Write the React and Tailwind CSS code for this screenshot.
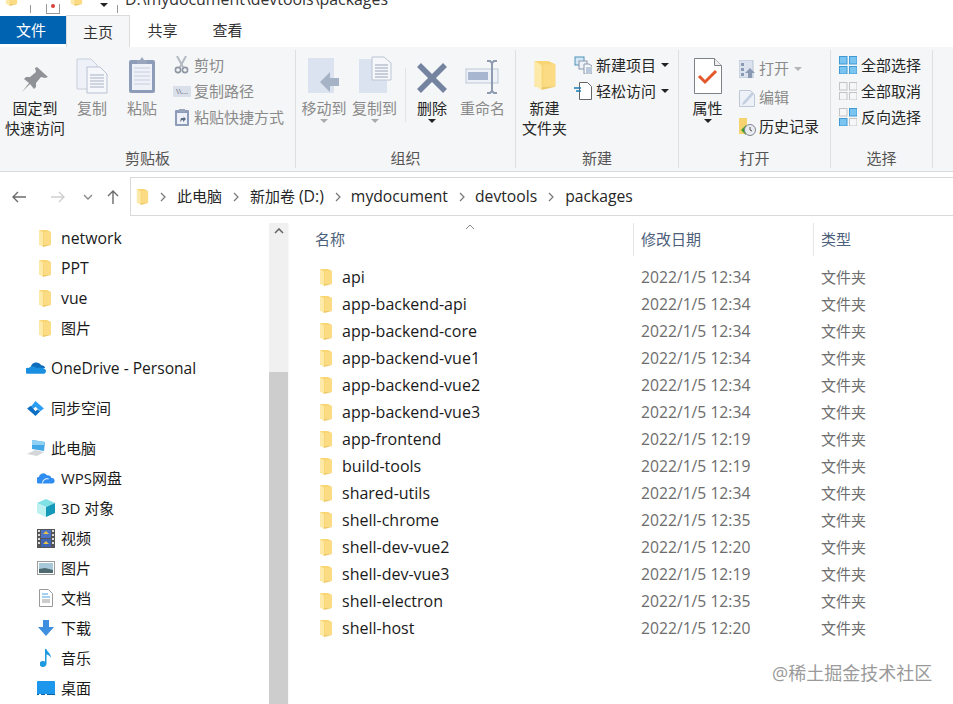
import React from 'react';

const sidebarTop = [
  { name: 'network', latin: true },
  { name: 'PPT', latin: true },
  { name: 'vue', latin: true },
  { name: '图片' },
];

const files = [
  ['api', '2022/1/5 12:34'],
  ['app-backend-api', '2022/1/5 12:34'],
  ['app-backend-core', '2022/1/5 12:34'],
  ['app-backend-vue1', '2022/1/5 12:34'],
  ['app-backend-vue2', '2022/1/5 12:34'],
  ['app-backend-vue3', '2022/1/5 12:34'],
  ['app-frontend', '2022/1/5 12:19'],
  ['build-tools', '2022/1/5 12:19'],
  ['shared-utils', '2022/1/5 12:34'],
  ['shell-chrome', '2022/1/5 12:35'],
  ['shell-dev-vue2', '2022/1/5 12:20'],
  ['shell-dev-vue3', '2022/1/5 12:19'],
  ['shell-electron', '2022/1/5 12:35'],
  ['shell-host', '2022/1/5 12:20'],
];

const Folder = ({ className = 'w-[14px] h-[19px]' }) => (
  <svg viewBox="0 0 14 19" className={className}>
    <path d="M1 1h8l4 2v13H1z" fill="#f9d674" />
    <path d="M6 3h7v13H6z" fill="#fbdc85" />
    <path d="M1 1l4 2.500V18l-4-2.500z" fill="#fdeaa9" />
    <path d="M5 16h8l-8 2z" fill="#edc968" />
  </svg>
);

const Caret = ({ color = '#222' }) => (
  <svg viewBox="0 0 8 4" className="w-2 h-1">
    <path d="M0 0h8L4 4z" fill={color} />
  </svg>
);

const Pin = () => (
  <svg viewBox="0 0 28 28" className="w-7 h-7">
    <path d="M16 1l11 10-3 1-4-1-5 6 0 4-2 2-4-5-8 8 7-9-5-4 2-2 4 0 6-5-1-4z" fill="#8f9296" />
  </svg>
);

const CopyIcon = () => (
  <svg viewBox="0 0 32 36" className="w-8 h-9">
    <path d="M1 1h14l6 6v24H1z" fill="#eef2f8" stroke="#c8cfdb" />
    <path d="M11 9h13l7 7v19H11z" fill="#f5f7fb" stroke="#b9c2d2" />
    <path d="M14 17h14M14 20h14M14 23h14M14 26h14M14 29h14" stroke="#a9b2c4" />
  </svg>
);

const PasteIcon = () => (
  <svg viewBox="0 0 28 38" className="w-7 h-[38px]">
    <rect x="1" y="4" width="26" height="33" rx="2" fill="#8d9cb8" />
    <rect x="4" y="8" width="20" height="26" fill="#eef1f8" />
    <path d="M6 12h16M6 16h16M6 20h16M6 24h16M6 28h16" stroke="#c5cede" />
    <path d="M9 4h3l2-3 2 3h3v4H9z" fill="#98a5bd" />
  </svg>
);

const MoveIcon = () => (
  <svg viewBox="0 0 34 38" className="w-[34px] h-[38px]">
    <rect x="1" y="2" width="26" height="35" fill="#dbe3f1" />
    <path d="M13 26l10-10v6h9v8h-9v6z" fill="#a6b2c6" />
  </svg>
);

const CopyToIcon = () => (
  <svg viewBox="0 0 34 38" className="w-[34px] h-[38px]">
    <rect x="1" y="3" width="28" height="34" fill="#dbe3f1" />
    <path d="M14 1h12l7 6v17H14z" fill="#f5f7fb" stroke="#bcc5d4" />
    <path d="M17 9h13M17 12h13M17 15h13M17 18h13M17 21h13" stroke="#9aa5b8" />
  </svg>
);

const DeleteIcon = () => (
  <svg viewBox="0 0 32 32" className="w-8 h-8">
    <path d="M3 3l26 26M29 3L3 29" stroke="#74839f" strokeWidth="5.500" />
  </svg>
);

const RenameIcon = () => (
  <svg viewBox="0 0 36 34" className="w-9 h-[34px]">
    <rect x="1" y="9" width="32" height="14" fill="#eef2f8" stroke="#bcc7d8" />
    <rect x="3" y="12" width="20" height="8" fill="#a8b6d0" />
    <path d="M22 1h3l2 2 2-2h3M27 3v28M22 33h3l2-2 2 2h3" fill="none" stroke="#8f9bb0" strokeWidth="2" />
  </svg>
);

const PropsIcon = () => (
  <svg viewBox="0 0 28 36" className="w-7 h-9">
    <path d="M.5.5h20l7 7v28H.5z" fill="#fff" stroke="#7f8187" />
    <path d="M20.500.5v7h7" fill="#eee" stroke="#7f8187" />
    <path d="M5 18l6 6 11-11" fill="none" stroke="#e2572b" strokeWidth="3" />
  </svg>
);

const NewItem = () => (
  <svg viewBox="0 0 18 18" className="w-[18px] h-[18px]">
    <rect x="1" y="1" width="9" height="8" fill="#d3e7f5" stroke="#4d94b8" />
    <rect x="5" y="5" width="8" height="8" fill="#eef2f8" stroke="#8a98ad" />
    <path d="M10 8h5l3 2v8h-8z" fill="#f5f7fb" stroke="#8a98ad" />
    <path d="M12 12h5M12 14h5M12 16h5" stroke="#7d9cc0" />
  </svg>
);

const EasyAccess = () => (
  <svg viewBox="0 0 18 18" className="w-[18px] h-[18px]">
    <path d="M5.500.5h8l4 4v13h-12z" fill="#fff" stroke="#666" />
    <path d="M0 6h7M2 9h5" stroke="#1b7fb8" strokeWidth="1.400" />
  </svg>
);

const OpenIcon = () => (
  <svg viewBox="0 0 16 18" className="w-4 h-[18px]">
    <rect x="0" y="0" width="14" height="18" fill="#dce3ee" stroke="#b9c3d2" />
    <path d="M2 3h3v3H2zM2 8h3v3H2zM2 13h3v3H2z" fill="#8b9ab3" />
    <path d="M11 8l5 5h-3v5h-4v-5H6z" fill="#8b9ab3" />
  </svg>
);

const EditIcon = () => (
  <svg viewBox="0 0 16 18" className="w-4 h-[18px]">
    <path d="M.5 1.500h11l4 4v12H.5z" fill="#eef2f8" stroke="#bcc7d8" />
    <path d="M4 13L13 3l2 2-9 10-3 1z" fill="#c4d0e2" />
  </svg>
);

const HistoryIcon = () => (
  <svg viewBox="0 0 18 18" className="w-[18px] h-[18px]">
    <path d="M1 0h8v16H1z" fill="#f7d36f" />
    <path d="M3 12l5-5v3h2v4H8v3z" fill="#3f9c35" />
    <circle cx="12" cy="12" r="5.500" fill="#e8ebef" stroke="#808690" />
    <path d="M12 9v3l2 1" fill="none" stroke="#555" />
  </svg>
);

const Grid = ({ cells }) => (
  <svg viewBox="0 0 18 18" className="w-[18px] h-[18px]">
    {[[0, 0], [10, 0], [0, 10], [10, 10]].map(([x, y], i) => {
      const on = cells[i];
      return (
        <rect key={i} x={x + 0.5} y={y + 0.5} width="7.500" height="7.500" fill={on ? '#7cc4f0' : '#f5f6f7'} stroke={on ? '#3c9ad6' : '#c4c4c4'} />
      );
    })}
  </svg>
);

const Scissors = () => (
  <svg viewBox="0 0 16 18" className="w-4 h-[18px]">
    <path d="M3 0l6 11M12 0L6 11" stroke="#b4bac4" strokeWidth="2" />
    <circle cx="4" cy="14" r="2.600" fill="none" stroke="#8e96a4" strokeWidth="1.600" />
    <circle cx="11" cy="14" r="2.600" fill="none" stroke="#8e96a4" strokeWidth="1.600" />
  </svg>
);

const PathIcon = () => (
  <div className="w-[18px] h-[11px] bg-[#d9e0ea] flex items-center justify-center text-[8px] leading-none text-[#667]">\\...</div>
);

const ShortcutIcon = () => (
  <svg viewBox="0 0 14 18" className="w-[14px] h-[18px]">
    <rect x="0" y="2" width="14" height="16" rx="1" fill="#8d9cb8" />
    <rect x="2" y="5" width="10" height="11" fill="#eef1f8" />
    <path d="M4 1h6v3H4z" fill="#98a5bd" />
    <path d="M5 14l1-4 3 0-1-2 3 3-3 3 0-2-1 0z" fill="#5e6d86" />
  </svg>
);

const LargeBtn = ({ width, icon, lines, dim, caret, caretColor }) => (
  <div className={`${width} shrink-0 flex flex-col items-center`}>
    <div className="h-[44px] flex items-end justify-center">{icon}</div>
    <div className={`mt-[4px] text-[15px] leading-[20px] text-center whitespace-nowrap ${dim ? 'text-[#8a8a8a]' : 'text-[#262626]'}`}>
      {lines.map((l) => (
        <div key={l}>{l}</div>
      ))}
    </div>
    {caret && (
      <div className="mt-[1px] leading-none flex">
        <Caret color={caretColor} />
      </div>
    )}
  </div>
);

const SmallRow = ({ icon, label, dim, caret, gap = 'ml-[3px]', height = 'h-[26px]' }) => (
  <div className={`${height} flex items-center whitespace-nowrap`}>
    <div className="w-[18px] flex justify-center">{icon}</div>
    <span className={`${gap} text-[15px] ${dim ? 'text-[#8a8a8a]' : 'text-[#262626]'}`}>{label}</span>
    {caret && (
      <span className="ml-[5px]">
        <Caret color={dim ? '#b5b5b5' : '#222'} />
      </span>
    )}
  </div>
);

const Group = ({ width, label, children }) => (
  <div className={`${width} shrink-0 h-full flex flex-col border-r border-[#dfe0e2]`}>
    <div className="h-[98px] shrink-0 flex items-start">{children}</div>
    <div className="text-center text-[15px] leading-[20px] text-[#555]">{label}</div>
  </div>
);

const Ribbon = () => (
  <div className="h-[125px] bg-[#f5f6f7] border-b border-[#dadbdc] flex pt-[3px] pb-[3px]">
    <Group width="w-[296px]" label="剪贴板">
      <LargeBtn width="w-[70px]" icon={<Pin />} lines={['固定到', '快速访问']} />
      <LargeBtn width="w-[44px]" icon={<CopyIcon />} lines={['复制']} dim />
      <LargeBtn width="w-[56px]" icon={<PasteIcon />} lines={['粘贴']} dim />
      <div className="ml-[3px] pt-[2px]">
        <SmallRow icon={<Scissors />} label="剪切" dim />
        <SmallRow icon={<PathIcon />} label="复制路径" dim />
        <SmallRow icon={<ShortcutIcon />} label="粘贴快捷方式" dim />
      </div>
    </Group>
    <Group width="w-[220px]" label="组织">
      <LargeBtn width="w-[56px]" icon={<MoveIcon />} lines={['移动到']} dim caret caretColor="#aaa" />
      <LargeBtn width="w-[45px]" icon={<CopyToIcon />} lines={['复制到']} dim caret caretColor="#aaa" />
      <div className="w-px h-[54px] mt-[18px] ml-[8px] bg-[#e2e3e5]" />
      <LargeBtn width="w-[52px]" icon={<DeleteIcon />} lines={['删除']} caret />
      <LargeBtn width="w-[49px]" icon={<RenameIcon />} lines={['重命名']} dim />
    </Group>
    <Group width="w-[163px]" label="新建">
      <LargeBtn width="w-[57px]" icon={<Folder className="w-[24px] h-[33px] mb-[2px]" />} lines={['新建', '文件夹']} />
      <div className="ml-[1px] pt-[2px]">
        <SmallRow icon={<NewItem />} gap="ml-[4px]" label="新建项目" caret />
        <SmallRow icon={<EasyAccess />} gap="ml-[4px]" label="轻松访问" caret />
      </div>
    </Group>
    <Group width="w-[152px]" label="打开">
      <LargeBtn width="w-[57px]" icon={<PropsIcon />} lines={['属性']} caret />
      <div className="ml-[2px] pt-[4px]">
        <SmallRow height="h-[29px]" icon={<OpenIcon />} label="打开" dim caret />
        <SmallRow height="h-[29px]" icon={<EditIcon />} label="编辑" dim />
        <SmallRow height="h-[29px]" icon={<HistoryIcon />} label="历史记录" />
      </div>
    </Group>
    <Group width="w-[102px]" label="选择">
      <div className="pl-[8px] pt-[2px]">
        <SmallRow icon={<Grid cells={[1, 1, 1, 1]} />} gap="ml-[4px]" label="全部选择" />
        <SmallRow icon={<Grid cells={[0, 0, 0, 0]} />} gap="ml-[4px]" label="全部取消" />
        <SmallRow icon={<Grid cells={[0, 1, 1, 0]} />} gap="ml-[4px]" label="反向选择" />
      </div>
    </Group>
  </div>
);

const Chevron = () => (
  <svg viewBox="0 0 6 10" className="w-[6px] h-[10px] mx-[11px] shrink-0">
    <path d="M1 1l4 4-4 4" fill="none" stroke="#777" strokeWidth="1.200" />
  </svg>
);

const Arrow = ({ dir, color }) => (
  <svg viewBox="0 0 16 16" className="w-4 h-4">
    {dir === 'left' && <path d="M15 8H2M7 3L2 8l5 5" fill="none" stroke={color} strokeWidth="1.400" />}
    {dir === 'right' && <path d="M1 8h13M9 3l5 5-5 5" fill="none" stroke={color} strokeWidth="1.400" />}
    {dir === 'up' && <path d="M8 15V2M3 7l5-5 5 5" fill="none" stroke={color} strokeWidth="1.400" />}
    {dir === 'down' && <path d="M4 6l4 4 4-4" fill="none" stroke={color} strokeWidth="1.400" />}
  </svg>
);

const AddressBar = () => (
  <div className="h-[44px] bg-white flex items-start pt-[5px]">
    <div className="w-[130px] h-[39px] shrink-0 flex items-center pl-[11px]">
      <Arrow dir="left" color="#6b6b6b" />
      <span className="ml-[23px]"><Arrow dir="right" color="#cfcfcf" /></span>
      <span className="ml-[14px]"><Arrow dir="down" color="#888" /></span>
      <span className="ml-[9px]"><Arrow dir="up" color="#6b6b6b" /></span>
    </div>
    <div className="flex-1 h-[39px] border-t border-l border-b border-[#d9d9d9] flex items-center pl-[5px] text-[15px] text-[#262626] whitespace-nowrap">
      <Folder className="w-[13px] h-[18px]" />
      <Chevron />
      <span>此电脑</span>
      <Chevron />
      <span>新加卷 <span className="text-[15.8px]">(D:)</span></span>
      <Chevron />
      <span className="text-[15.7px] -ml-[1px]">mydocument</span>
      <Chevron />
      <span className="text-[15.7px] -ml-[1px]">devtools</span>
      <Chevron />
      <span className="text-[15.7px]">packages</span>
    </div>
  </div>
);

const OneDrive = () => (
  <svg viewBox="0 0 22 14" className="w-[21px] h-[14px]">
    <path d="M5 6a6 6 0 0 1 11-2 4 4 0 0 1 4 3H7z" fill="#0f6cbd" />
    <path d="M1 13a3 3 0 0 1 2-6c2-2 6-2 8 0 3-1 9-1 10 3a3 3 0 0 1-2 3z" fill="#1a8fe0" />
  </svg>
);

const SyncIcon = () => (
  <svg viewBox="0 0 20 16" className="w-[19px] h-[15px]">
    <path d="M10 0l9 8-4 3-5-5-2 2-3-2z" fill="#2a9df4" />
    <path d="M1 8l4-3 5 6 2-2 3 2-5 5z" fill="#0d6fc4" />
  </svg>
);

const PcIcon = () => (
  <svg viewBox="0 0 20 18" className="w-5 h-[18px]">
    <path d="M6 1l13 2-1 9-12-2z" fill="#45a8e6" />
    <path d="M6 1l13 2-1 3-12 0z" fill="#8fd0f5" />
    <path d="M9 11l-8 4 10 2 7-4z" fill="#d4d7da" />
  </svg>
);

const WpsIcon = () => (
  <svg viewBox="0 0 20 14" className="w-[19px] h-[14px]">
    <path d="M2 13a3.500 3.500 0 0 1 0-7 5 5 0 0 1 9-2 4 4 0 0 1 5 3 3 3 0 0 1 1 6z" fill="#2f8cf0" />
    <path d="M6 13c0-4 4-6 7-5" fill="none" stroke="#cfe6fd" strokeWidth="1.200" />
  </svg>
);

const Cube = () => (
  <svg viewBox="0 0 18 18" className="w-[18px] h-[18px]">
    <path d="M9 0l9 4-9 4-9-4z" fill="#7fe0e6" />
    <path d="M0 4l9 4v10l-9-4z" fill="#bdf0f0" />
    <path d="M18 4L9 8v10l9-4z" fill="#1699b8" />
  </svg>
);

const Film = () => (
  <svg viewBox="0 0 18 19" className="w-[18px] h-[19px]">
    <rect width="18" height="19" fill="#555" />
    <path d="M1 1h2v2H1zM1 5h2v2H1zM1 9h2v2H1zM1 13h2v2H1zM15 1h2v2h-2zM15 5h2v2h-2zM15 9h2v2h-2zM15 13h2v2h-2z" fill="#ddd" />
    <rect x="4" y="1" width="10" height="8" fill="#4d74c4" />
    <rect x="4" y="10" width="10" height="8" fill="#3e64b4" />
    <path d="M6 5l3-3 3 3zM6 15l3-3 3 3z" fill="#e8c34a" />
  </svg>
);

const PictureIcon = () => (
  <svg viewBox="0 0 18 14" className="w-[18px] h-[14px]">
    <rect x=".5" y=".5" width="17" height="13" fill="#fff" stroke="#9a9a9a" />
    <rect x="2" y="2" width="14" height="10" fill="#a6c8d8" />
    <path d="M2 8l6-1 8 2v3H2z" fill="#4e6a70" />
  </svg>
);

const DocIcon = () => (
  <svg viewBox="0 0 14 18" className="w-[14px] h-[18px]">
    <path d="M.5.5h9l4 4v13H.5z" fill="#fff" stroke="#9a9a9a" />
    <path d="M3 5h6M3 8h8" stroke="#4ba3e3" />
    <path d="M3 11h8M3 13h8" stroke="#999" />
  </svg>
);

const DownIcon = () => (
  <svg viewBox="0 0 16 16" className="w-4 h-4">
    <path d="M5 0h6v7h5l-8 9-8-9h5z" fill="#3e8fe0" />
  </svg>
);

const MusicIcon = () => (
  <svg viewBox="0 0 12 18" className="w-3 h-[18px]">
    <path d="M5 0h1.500c.5 3 4.500 4 4.500 9-1-2-3-3.500-4.500-3.500V15a3.500 3 0 1 1-1.500-2.500z" fill="#1f9ae0" />
  </svg>
);

const DesktopIcon = () => (
  <svg viewBox="0 0 18 14" className="w-[18px] h-[14px]">
    <rect width="18" height="14" rx="1" fill="#1d97ec" />
    <rect y="13" width="18" height="1" fill="#0b62a8" />
    <path d="M2 13.500h2M8 13.500h2" stroke="#fff" />
  </svg>
);

const Sidebar = () => {
  const row = 'flex items-center whitespace-nowrap text-[15px] text-[#1a1a1a]';
  return (
    <div className="w-[269px] shrink-0 overflow-hidden pt-[7px]">
      {sidebarTop.map((it) => (
        <div key={it.name} className={`${row} h-[30px] pl-[38px]`}>
          <span className="w-[14px] flex justify-center"><Folder /></span>
          <span className={`ml-[9px] ${it.latin ? 'text-[15.8px] pt-[1px]' : ''}`}>{it.name}</span>
        </div>
      ))}
      <div className={`${row} h-[30px] pl-[26px] mt-[10px]`}>
        <OneDrive />
        <span className="ml-[4px] text-[15.6px] pt-[1px]">OneDrive - Personal</span>
      </div>
      <div className={`${row} h-[30px] pl-[26px] mt-[10px]`}>
        <SyncIcon />
        <span className="ml-[6px]">同步空间</span>
      </div>
      <div className={`${row} h-[30px] pl-[26px] mt-[10px]`}>
        <PcIcon />
        <span className="ml-[5px]">此电脑</span>
      </div>
      {[
        [<WpsIcon key="i" />, 'WPS网盘'],
        [<Cube key="i" />, '3D 对象'],
        [<Film key="i" />, '视频'],
        [<PictureIcon key="i" />, '图片'],
        [<DocIcon key="i" />, '文档'],
        [<DownIcon key="i" />, '下载'],
        [<MusicIcon key="i" />, '音乐'],
        [<DesktopIcon key="i" />, '桌面'],
      ].map(([icon, label]) => (
        <div key={label} className={`${row} h-[30px] pl-[37px]`}>
          <span className="w-[18px] flex justify-center">{icon}</span>
          <span className="ml-[6px]">{label}</span>
        </div>
      ))}
    </div>
  );
};

const Scrollbar = () => (
  <div className="w-[20px] shrink-0 mt-[7px] flex flex-col bg-[#f0f0f0] border-r border-[#f7f7f7]">
    <div className="h-[149px] flex justify-center pt-[5px]">
      <svg viewBox="0 0 10 6" className="w-[10px] h-[6px]">
        <path d="M1 5l4-4 4 4" fill="none" stroke="#666" strokeWidth="1.600" />
      </svg>
    </div>
    <div className="flex-1 bg-[#cdcdcd]" />
  </div>
);

const FileList = () => (
  <div className="flex-1 pl-[25px] overflow-hidden">
    <div className="h-[46px] flex items-start pt-[7px] text-[15px] text-[#4c607a] whitespace-nowrap">
      <div className="w-[319px] h-[33px] pl-[1px] flex items-center relative shrink-0">
        名称
        <svg viewBox="0 0 10 6" className="absolute left-[151px] top-[1px] w-[10px] h-[6px]">
          <path d="M1 5l4-4 4 4" fill="none" stroke="#888" />
        </svg>
      </div>
      <div className="w-[180px] h-[33px] border-l border-[#e5e5e5] pl-[7px] shrink-0 flex items-center">修改日期</div>
      <div className="h-[33px] border-l border-[#e5e5e5] pl-[7px] flex-1 flex items-center">类型</div>
    </div>
    <div className="pt-[2px]">
      {files.map(([name, date]) => (
        <div key={name} className="h-[27px] flex items-center text-[15px] whitespace-nowrap">
          <div className="w-[319px] shrink-0 flex items-center pl-[5px] text-[#1a1a1a]">
            <Folder />
            <span className="ml-[9px] text-[16px] -mt-[1px]">{name}</span>
          </div>
          <div className="w-[180px] shrink-0 pl-[8px] text-[#6d6d6d] text-[15.7px]">{date}</div>
          <div className="flex-1 pl-[8px] text-[#6d6d6d]">文件夹</div>
        </div>
      ))}
    </div>
  </div>
);

export default function App() {
  return (
    <div className="w-[953px] h-[704px] overflow-hidden bg-white relative font-['Open_Sans','Noto_Sans_CJK_SC',sans-serif]">
      {/* title bar, cut off by the top of the screenshot */}
      <div className="h-[15px] overflow-hidden flex items-end">
        <div className="flex items-end h-[15px] pl-[5px]">
          <Folder className="w-[13px] h-[18px] mb-[8px]" />
          <div className="w-px h-[8px] bg-[#999] ml-[12px] mb-[2px]" />
          <div className="w-[14px] h-[10px] ml-[15px] mb-[1px] border border-t-0 border-[#999] flex justify-center">
            <div className="w-[4px] h-[4px] bg-[#d9403a] rounded-full" />
          </div>
          <Folder className="w-[13px] h-[18px] mb-[8px] ml-[10px]" />
          <div className="ml-[17px] mb-[8px]"><Caret /></div>
          <div className="w-px h-[8px] bg-[#999] ml-[9px] mb-[2px]" />
          <div className="ml-[7px] h-[15px] text-[15.9px] leading-[15px] -translate-y-[8px] text-[#333]">D:\mydocument\devtools\packages</div>
        </div>
      </div>
      {/* tabs */}
      <div className="h-[32px] flex items-end text-[15px] leading-[20px]">
        <div className="w-[66px] h-[28px] mb-[3px] pr-[4px] bg-[#0063b1] text-white flex items-center justify-center">文件</div>
        <div className="w-[64px] h-[32px] bg-[#f5f6f7] border-l border-r border-t border-[#dadbdc] text-[#333] flex items-center justify-center">主页</div>
        <div className="w-[65px] h-[28px] mb-[3px] text-[#333] flex items-center justify-center">共享</div>
        <div className="w-[65px] h-[28px] mb-[3px] text-[#333] flex items-center justify-center">查看</div>
      </div>
      <Ribbon />
      <AddressBar />
      <div className="h-[488px] flex">
        <Sidebar />
        <Scrollbar />
        <FileList />
      </div>
      {/* site watermark */}
      <div className="absolute left-[772px] top-[662px] text-[18px] leading-[22px] text-[#9a9a9a] whitespace-nowrap">@稀土掘金技术社区</div>
    </div>
  );
}
